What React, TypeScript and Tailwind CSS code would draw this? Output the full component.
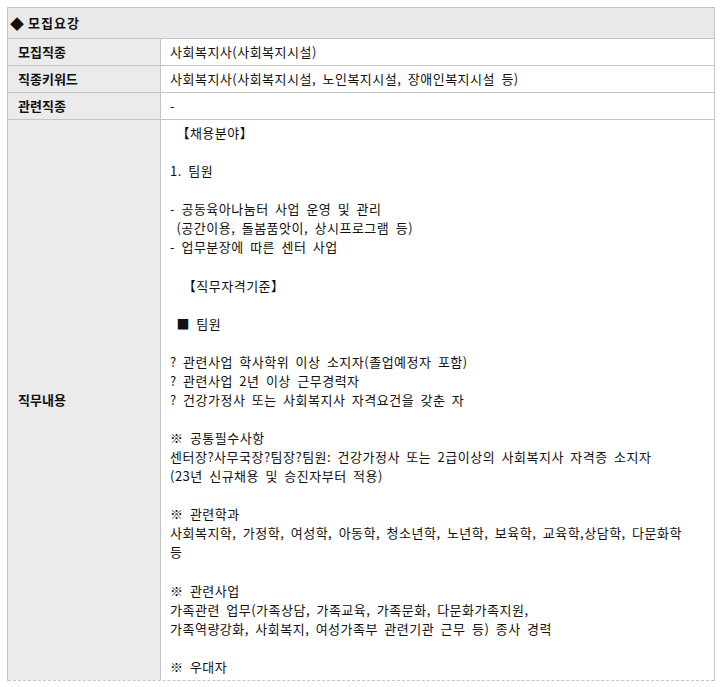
const rows = [
  { label: '모집직종', value: '사회복지사(사회복지시설)' },
  { label: '직종키워드', value: '사회복지사(사회복지시설, 노인복지시설, 장애인복지시설 등)' },
  { label: '관련직종', value: '-' },
];

const duties = [
  ' 【채용분야】',
  '',
  '1. 팀원',
  '',
  '- 공동육아나눔터 사업 운영 및 관리',
  ' (공간이용, 돌봄품앗이, 상시프로그램 등)',
  '- 업무분장에 따른 센터 사업',
  '',
  '  【직무자격기준】',
  '',
  ' ■ 팀원',
  '',
  '? 관련사업 학사학위 이상 소지자(졸업예정자 포함)',
  '? 관련사업 2년 이상 근무경력자',
  '? 건강가정사 또는 사회복지사 자격요건을 갖춘 자',
  '',
  '※ 공통필수사항',
  '센터장?사무국장?팀장?팀원: 건강가정사 또는 2급이상의 사회복지사 자격증 소지자',
  '(23년 신규채용 및 승진자부터 적용)',
  '',
  '※ 관련학과',
  '사회복지학, 가정학, 여성학, 아동학, 청소년학, 노년학, 보육학, 교육학,상담학, 다문화학',
  '등',
  '',
  '※ 관련사업',
  '가족관련 업무(가족상담, 가족교육, 가족문화, 다문화가족지원,',
  '가족역량강화, 사회복지, 여성가족부 관련기관 근무 등) 종사 경력',
  '',
  '※ 우대자',
  '',
  '',
];

export default function App() {
  return (
    <div className="min-h-[687px] bg-white pt-[7px] pl-[7px] font-['Noto_Sans_CJK_KR','Noto_Sans',sans-serif] text-[13px] text-[#111]">
      <div className="w-[708px] border-x border-t border-[#c4c4c4]">
        <div className="flex h-[31px] items-center border-b border-[#c4c4c4] bg-[#e9e9e9] pl-[2px] font-bold tracking-[1px]">
          <span className="mr-[3px] text-[14px]">◆</span>
          모집요강
        </div>

        {rows.map((row) => (
          <div key={row.label} className="flex h-[27px] border-b border-[#c4c4c4]">
            <div className="flex w-[153px] shrink-0 items-center border-r border-[#c4c4c4] bg-[#ebebeb] pl-[10px] font-bold">
              {row.label}
            </div>
            <div className="flex flex-1 items-center whitespace-pre pl-[9px] tracking-[0.5px] [word-spacing:3px]">
              {row.value}
            </div>
          </div>
        ))}

        <div className="flex h-[561px] border-b border-dashed border-[#c4c4c4]">
          <div className="flex w-[153px] shrink-0 items-center border-r border-[#c4c4c4] bg-[#ebebeb] pl-[10px] font-bold">
            직무내용
          </div>
          <div className="flex-1 overflow-hidden pl-[9px] pt-[3px] leading-[19.07px] tracking-[0.5px] [word-spacing:3px]">
            {duties.map((line, i) => (
              <div key={i} className="h-[19.07px] whitespace-pre">
                {line}
              </div>
            ))}
          </div>
        </div>
      </div>
    </div>
  );
}
